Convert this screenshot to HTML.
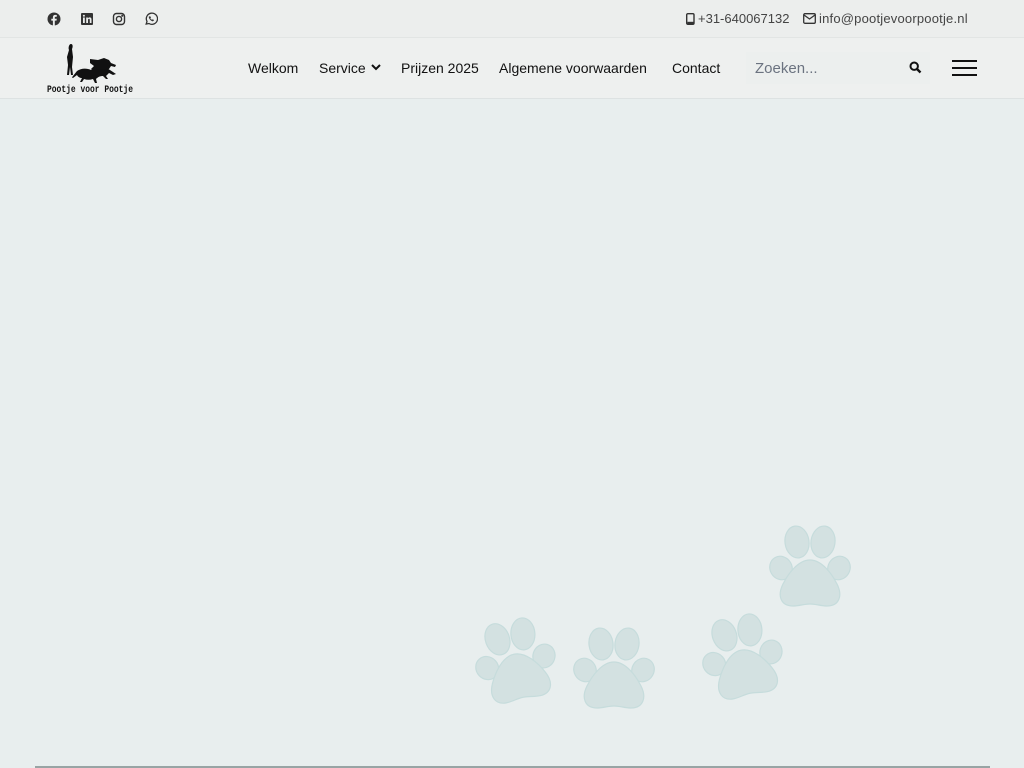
<!DOCTYPE html>
<html><head><meta charset="utf-8"><style>
body{margin:0;width:1024px;height:768px;overflow:hidden;background:#e8eeee;font-family:"Liberation Sans",sans-serif;position:relative}
.top{position:absolute;left:0;top:0;width:1024px;height:37px;background:#eceeed;border-bottom:1px solid #e2e5e4}
.hdr{position:absolute;left:0;top:38px;width:1024px;height:60px;background:#eef0ef;border-bottom:1px solid #dde2e2}
.ic{position:absolute;top:12px}
.nav{position:absolute;top:60px;font-size:14px;color:#111}
.tr{position:absolute;top:11px;font-size:13px;color:#444}
</style></head><body>
<div class="top">
<svg class="ic" style="left:47px" width="14" height="14" viewBox="0 0 14 14"><circle cx="7" cy="7" r="6.5" fill="#333"/><path d="M7.8 14V8.6h1.7l.3-1.9h-2V5.6c0-.5.2-.9 1-.9h1V3a9 9 0 0 0-1.5-.1c-1.5 0-2.4.9-2.4 2.5v1.3H4.3v1.9h1.6V14z" fill="#eceeed"/></svg>
<svg class="ic" style="left:80px" width="14" height="14" viewBox="0 0 14 14"><rect x="1" y="1" width="12" height="12" rx="1" fill="#333"/><rect x="3" y="5.5" width="1.8" height="5.5" fill="#eceeed"/><circle cx="3.9" cy="3.8" r="1" fill="#eceeed"/><path d="M6.2 5.5h1.7v.8c.4-.6 1-.9 1.8-.9 1.3 0 1.8.8 1.8 2.2V11H9.8V7.9c0-.7-.2-1.1-.8-1.1S8 7.3 8 8v3H6.2z" fill="#eceeed"/></svg>
<svg class="ic" style="left:112px" width="14" height="14" viewBox="0 0 14 14" fill="none" stroke="#333" stroke-width="1.4"><rect x="1.5" y="1.5" width="11" height="11" rx="3"/><circle cx="7" cy="7" r="2.6"/><circle cx="10.3" cy="3.7" r=".4" fill="#333"/></svg>
<svg class="ic" style="left:144px" width="14" height="14" viewBox="0 0 14 14" fill="none" stroke="#333" stroke-width="1.3"><path d="M2.2 12l.8-2.6A5.6 5.6 0 1 1 5 11.5z"/><path d="M5 4.7c0 2 1.8 4 4 4.4l.8-1-1.2-.6-.6.6c-.8-.4-1.5-1-1.9-1.8l.6-.6-.5-1.2z" fill="#333" stroke-width=".5"/></svg>
<svg style="position:absolute;left:686px;top:13px" width="9" height="12" viewBox="0 0 9 12"><rect x=".7" y=".7" width="7.3" height="10.6" rx="1.2" fill="none" stroke="#333" stroke-width="1.4"/><rect x="1.5" y="8.8" width="6" height="2.3" fill="#333"/></svg>
<span class="tr" style="left:698px">+31-640067132</span>
<svg style="position:absolute;left:803px;top:13px" width="13" height="11" viewBox="0 0 13 11" fill="none" stroke="#333" stroke-width="1.3"><rect x=".7" y=".7" width="11.6" height="9.6" rx="1.2"/><path d="M1 2l5.5 4L12 2"/></svg>
<span class="tr" style="left:819px;letter-spacing:.2px">info@pootjevoorpootje.nl</span>
</div>
<div class="hdr"></div>
<svg style="position:absolute;left:44px;top:41px" width="92" height="55" viewBox="0 0 92 55">
<path d="M27 3c2 0 2 3 1 5l1 8-1 10 1 8h-2l-1-8-1 8h-2l1-10-1-8 2-7c-1-2 0-6 2-6z" fill="#111"/>
<path d="M33 30c4-3 10-3 14-1l6-2c5-1 9-1 13 2l6 4-3 1-4-2-3 3 2 3h-2l-3-3c-3 0-5 1-7 3l1 4h-2l-2-4c-3 1-6 1-9 0l-2 3h-2l2-4c-2 0-4-1-5-3l-4 3c-1 0-1-1 0-2z" fill="#111"/>
<path d="M46 18l8 1 6-2 5 2 2 3 5 2-1 2-4-1-2 3-6 1-6-1-4 2-2-2 3-3-4-3z" fill="#111"/>
<text x="3" y="51" font-family="Liberation Mono,monospace" font-size="10" font-weight="bold" fill="#111" textLength="86" lengthAdjust="spacingAndGlyphs">Pootje voor Pootje</text>
</svg>
<span class="nav" style="left:248px">Welkom</span>
<span class="nav" style="left:319px">Service</span>
<svg style="position:absolute;left:371px;top:64px" width="10" height="7" viewBox="0 0 10 7"><path d="M1 1l4 4 4-4" fill="none" stroke="#111" stroke-width="2"/></svg>
<span class="nav" style="left:401px">Prijzen 2025</span>
<span class="nav" style="left:499px">Algemene voorwaarden</span>
<span class="nav" style="left:672px">Contact</span>
<div style="position:absolute;left:746px;top:52px;width:184px;height:32px;background:#ecefee"></div>
<span style="position:absolute;left:755px;top:60px;font-size:15px;color:#6b7380">Zoeken...</span>
<svg style="position:absolute;left:909px;top:61px" width="13" height="13" viewBox="0 0 13 13"><circle cx="5.2" cy="5.2" r="3.7" fill="none" stroke="#111" stroke-width="2"/><path d="M8 8l3.5 3.5" stroke="#111" stroke-width="2.4"/></svg>
<div style="position:absolute;left:952px;top:60px;width:25px;height:2px;background:#111"></div>
<div style="position:absolute;left:952px;top:67px;width:25px;height:2px;background:#111"></div>
<div style="position:absolute;left:952px;top:74px;width:25px;height:2px;background:#111"></div>
<svg style="position:absolute;left:0;top:0" width="1024" height="768">
<defs><g id="p" fill="#d3e1e1" stroke="#c6dcdc" stroke-width="1.2">
<ellipse cx="-29" cy="-2" rx="11" ry="12" transform="rotate(-30 -29 -2)"/>
<ellipse cx="-13" cy="-28" rx="12" ry="16" transform="rotate(-8 -13 -28)"/>
<ellipse cx="13" cy="-28" rx="12" ry="16" transform="rotate(8 13 -28)"/>
<ellipse cx="29" cy="-2" rx="11" ry="12" transform="rotate(30 29 -2)"/>
<path d="M0 -10c12 0 22 14 27 24 6 12 2 22-10 22-6 0-11-2-17-2s-11 2-17 2c-12 0-16-10-10-22 5-10 15-24 27-24z"/>
</g></defs>
<use href="#p" transform="translate(516,664) rotate(-12)"/>
<use href="#p" transform="translate(614,672)"/>
<use href="#p" transform="translate(743,660) rotate(-12)"/>
<use href="#p" transform="translate(810,570)"/>
</svg>
<div style="position:absolute;left:35px;top:766px;width:955px;height:2px;background:#98a4a4"></div>
</body></html>
